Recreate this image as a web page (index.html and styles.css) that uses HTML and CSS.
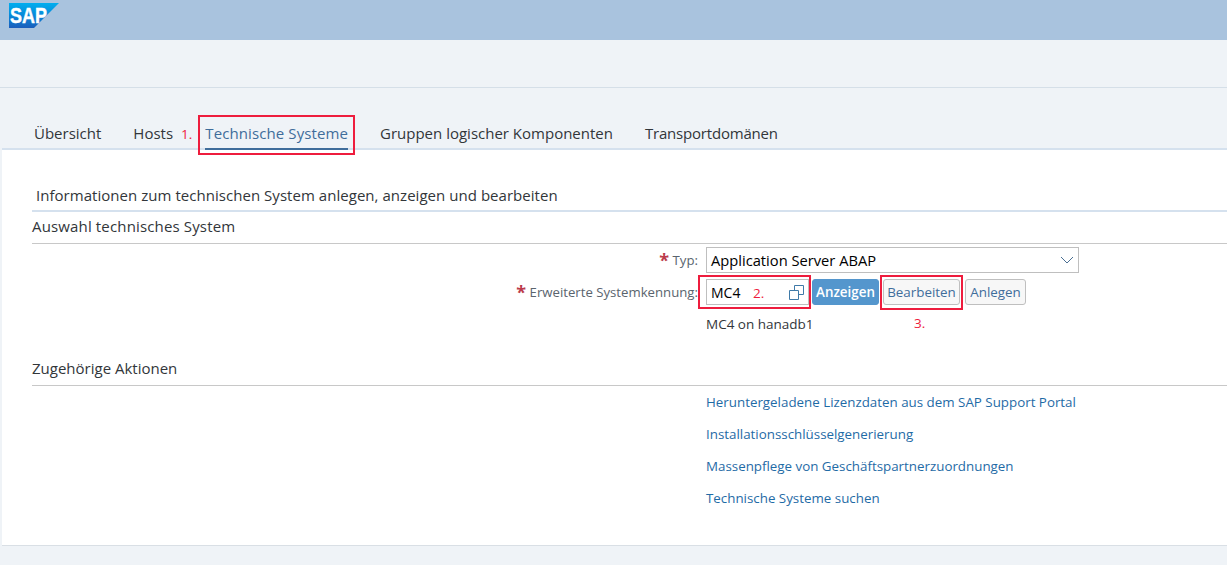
FILE: index.html
```html
<!DOCTYPE html>
<html>
<head>
<meta charset="utf-8">
<title>Technische Systeme</title>
<link rel="stylesheet" href="styles.css">
</head>
<body>
<div class="shell">
	<svg class="logo" width="50" height="25" viewBox="0 0 50 25">
		<defs>
			<linearGradient id="sapBlue" x1="0" y1="0" x2="0" y2="1">
				<stop offset="0" stop-color="#00aeef"/>
				<stop offset="0.55" stop-color="#0a84d6"/>
				<stop offset="1" stop-color="#1b5dbb"/>
			</linearGradient>
		</defs>
		<polygon points="0,0 50,0 25,25 0,25" fill="url(#sapBlue)"/>
		<text x="1" y="20" class="logo-text" textLength="37" lengthAdjust="spacingAndGlyphs">SAP</text>
	</svg>
</div>
<div class="subheader"></div>
<ul class="tabs">
	<li class="tab">Übersicht</li>
	<li class="tab tab-hosts">Hosts<span class="note note-tab">1.</span></li>
	<li class="tab tab-active">Technische Systeme<span class="redbox redbox-tab"></span></li>
	<li class="tab">Gruppen logischer Komponenten</li>
	<li class="tab tab-last">Transportdomänen</li>
</ul>
<div class="content">
	<div class="page-title">Informationen zum technischen System anlegen, anzeigen und bearbeiten</div>
	<div class="section-title first">Auswahl technisches System</div>
	<div class="form">
		<div class="label"><span class="req">*</span> Typ:</div>
		<div class="select">
			<span>Application Server ABAP</span>
			<svg width="14" height="8" viewBox="0 0 14 8"><path d="M1 1l6 6 6-6" fill="none" stroke="#4a6f92" stroke-width="1"/></svg>
		</div>
		<div class="label"><span class="req">*</span> Erweiterte Systemkennung:</div>
		<div class="controls">
			<div class="input">
				<span>MC4</span><span class="note note-input">2.</span>
				<svg class="vh" width="15" height="15" viewBox="0 0 15 15"><path d="M0.5 5.5h9v9h-9z M5.5 5V0.5h9v9H10" fill="none" stroke="#3f7aa8" stroke-width="1"/></svg>
				<span class="redbox redbox-input"></span>
			</div>
			<button class="btn btn-primary">Anzeigen</button>
			<button class="btn btn-edit">Bearbeiten<span class="redbox redbox-btn"></span><span class="note note-btn">3.</span></button>
			<button class="btn btn-new">Anlegen</button>
		</div>
		<div></div>
		<div class="desc">MC4 on hanadb1</div>
	</div>
	<div class="section-title second">Zugehörige Aktionen</div>
	<div class="links">
		<a href="#">Heruntergeladene Lizenzdaten aus dem SAP Support Portal</a>
		<a href="#">Installationsschlüsselgenerierung</a>
		<a href="#">Massenpflege von Geschäftspartnerzuordnungen</a>
		<a href="#">Technische Systeme suchen</a>
	</div>
</div>
</body>
</html>
```

FILE: styles.css
```css
*{box-sizing:border-box;}
html,body{margin:0;padding:0;height:565px;overflow:hidden;}
body{background:#eff3f7;color:#32363a;font-family:"Open Sans","Noto Sans","Liberation Sans",sans-serif;font-size:13px;}

.shell{height:40px;background:#a9c3de;padding:3px 0 0 9px;}
.logo{display:block;}
.logo-text{font-family:"Liberation Sans",sans-serif;font-size:22px;font-weight:bold;fill:#fff;stroke:#fff;stroke-width:.4;}
.subheader{height:48px;border-bottom:1px solid #d5dfe8;}

.tabs{list-style:none;margin:0;padding:0 0 0 34px;height:60px;display:flex;gap:32px;align-items:flex-end;}
.tab{position:relative;z-index:1;font-size:15px;line-height:20px;height:27px;margin-bottom:-2px;color:#32363a;}
.tab-hosts{margin-right:-19px;}
.tab-active{color:#3f6d9b;border-bottom:2px solid #3f6d9b;letter-spacing:.1px;}
.tab-last{letter-spacing:-.2px;}

.content{margin-left:2px;height:398px;background:#fff;border-top:2px solid #d5e1ee;border-bottom:1px solid #d9dfe5;padding-top:35px;}
.page-title{margin-left:34px;font-size:15px;line-height:20px;height:25px;letter-spacing:.04px;color:#32363a;}
.section-title{margin-left:30px;font-size:15px;line-height:20px;color:#32363a;}
.section-title.first{border-top:2px solid #d5e1ee;height:34px;padding-top:4px;border-bottom:1px solid #c8c8c8;letter-spacing:.15px;}
.section-title.second{height:32px;margin-top:21px;padding-top:4px;border-bottom:1px solid #c8c8c8;}

.form{display:grid;grid-template-columns:666px 1fr;column-gap:8px;margin:3px 0 0 30px;align-items:center;row-gap:6px;}
.label{text-align:right;font-size:13.2px;color:#5a646e;white-space:nowrap;}
.req{color:#bb3b4b;font-size:18px;line-height:14px;font-weight:bold;vertical-align:-2px;}
.select{width:373px;height:26px;border:1px solid #bfbfbf;display:flex;align-items:center;justify-content:space-between;padding:0 4px;font-size:14.7px;color:#000;}
.controls{display:flex;gap:4px;height:26px;align-items:center;}
.input{position:relative;width:103px;height:26px;margin-right:-1px;border:1px solid #bfbfbf;display:flex;align-items:center;padding:0 4px;font-size:14px;color:#000;}
.vh{margin-left:auto;}
.btn{position:relative;height:26px;padding:0 3px;border:1px solid #bfbfbf;border-radius:3px;background:#f7f7f7;color:#3f6d9b;font-family:inherit;font-size:13.4px;}
.btn-primary{background:#5496cd;border-color:#5496cd;color:#fff;font-weight:600;width:67px;}
.btn-edit{width:77px;margin-right:1px;}
.btn-new{width:61px;}
.desc{font-size:13.5px;line-height:18px;margin-top:4px;color:#32363a;}

.links{margin:7px 0 0 704px;display:flex;flex-direction:column;gap:14px;}
.links a{font-size:13.35px;line-height:18px;color:#1f6ba6;text-decoration:none;}

/* annotations on top of the screenshot */
.note{position:absolute;color:#ee1c3d;font-size:13.5px;line-height:18px;}
.note-tab{position:static;margin-left:8px;}
.note-input{left:46px;top:4px;}
.note-btn{left:30px;top:34px;}
.redbox{position:absolute;border:2px solid #ee1c3d;pointer-events:none;}
.redbox-tab{left:-7px;top:-8px;width:157px;height:40px;}
.redbox-input{left:-9px;top:-5px;width:113px;height:34px;}
.redbox-btn{left:-4px;top:-5px;width:83px;height:35px;}
```
